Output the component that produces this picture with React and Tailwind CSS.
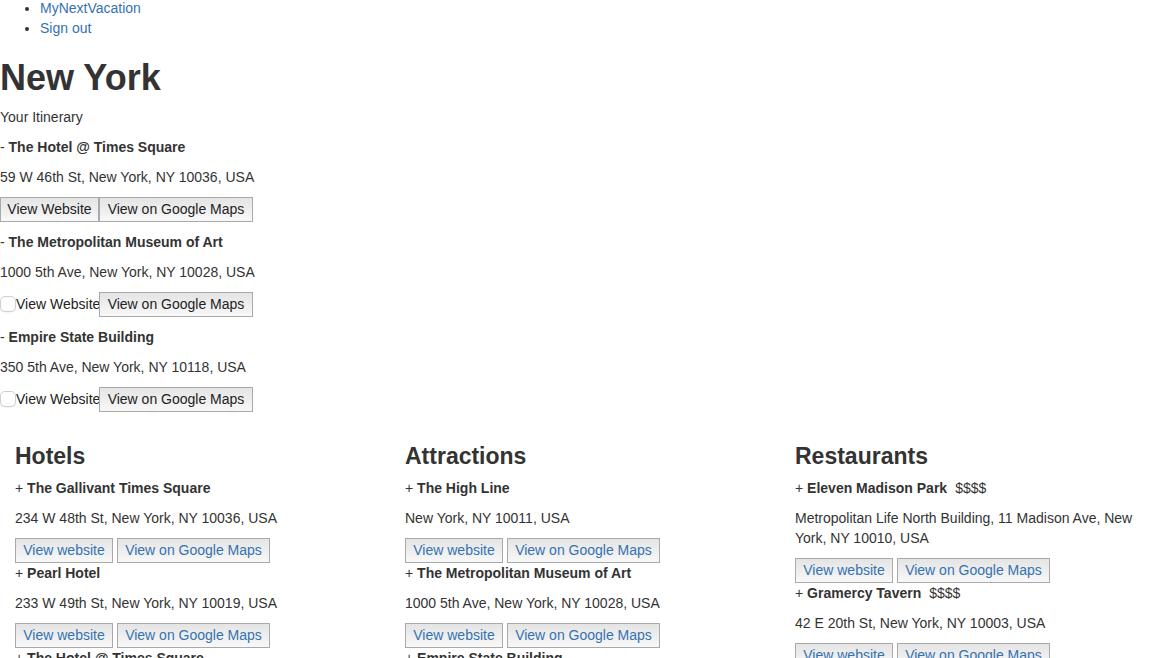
import React from "react";

const buttonClass =
  "inline-flex h-[25px] items-start justify-center whitespace-nowrap border border-[#a9a9a9] bg-linear-to-b from-[#e4e4e4] to-[#f8f8f8] pt-px";

const itinerary = [
  { name: "The Hotel @ Times Square", address: "59 W 46th St, New York, NY 10036, USA", website: true },
  { name: "The Metropolitan Museum of Art", address: "1000 5th Ave, New York, NY 10028, USA", website: false },
  { name: "Empire State Building", address: "350 5th Ave, New York, NY 10118, USA", website: false },
];

const sections = [
  {
    title: "Hotels",
    places: [
      { name: "The Gallivant Times Square", address: "234 W 48th St, New York, NY 10036, USA" },
      { name: "Pearl Hotel", address: "233 W 49th St, New York, NY 10019, USA" },
      { name: "The Hotel @ Times Square", address: "59 W 46th St, New York, NY 10036, USA" },
    ],
  },
  {
    title: "Attractions",
    places: [
      { name: "The High Line", address: "New York, NY 10011, USA" },
      { name: "The Metropolitan Museum of Art", address: "1000 5th Ave, New York, NY 10028, USA" },
      { name: "Empire State Building", address: "350 5th Ave, New York, NY 10118, USA" },
    ],
  },
  {
    title: "Restaurants",
    places: [
      {
        name: "Eleven Madison Park",
        price: "$$$$",
        address: "Metropolitan Life North Building, 11 Madison Ave, New York, NY 10010, USA",
      },
      { name: "Gramercy Tavern", price: "$$$$", address: "42 E 20th St, New York, NY 10003, USA" },
    ],
  },
];

function ItineraryItem({ item, id }) {
  return (
    <div className="flex flex-col gap-2.5">
      <p>
        - <strong>{item.name}</strong>
      </p>
      <p>{item.address}</p>
      <div className="flex text-[#222]">
        {item.website ? (
          <button type="button" className={`${buttonClass} w-[99px]`}>
            View Website
          </button>
        ) : (
          <div className="flex w-[99px] items-center pb-px">
            <input
              id={id}
              type="checkbox"
              className="size-4 shrink-0 appearance-none rounded-[5px] border border-[#cfcfcf] bg-white shadow-xs"
            />
            <label htmlFor={id} className="whitespace-nowrap">
              View Website
            </label>
          </div>
        )}
        <button type="button" className={`${buttonClass} w-[154px]`}>
          View on Google Maps
        </button>
      </div>
    </div>
  );
}

function Place({ place }) {
  return (
    <div>
      <p>
        + <strong>{place.name}</strong>
        {place.price && <span className="ml-2">{place.price}</span>}
      </p>
      <p className="my-2.5">{place.address}</p>
      <div className="flex gap-1 text-[#3572b0]">
        <a href="#website" className={`${buttonClass} w-[98px]`}>
          View website
        </a>
        <a href="#map" className={`${buttonClass} w-[153px]`}>
          View on Google Maps
        </a>
      </div>
    </div>
  );
}

export default function App() {
  return (
    <div className="overflow-x-clip bg-white font-['Liberation_Sans',Arial,sans-serif] text-[14px] leading-5 text-[#333]">
      <ul className="-mt-0.5 list-disc pl-10">
        <li>
          <a href="#home" className="text-[#3572b0]">
            MyNextVacation
          </a>
        </li>
        <li>
          <a href="#signout" className="text-[#3572b0]">
            Sign out
          </a>
        </li>
      </ul>
      <h1 className="mt-5 mb-[9px] text-[36px] leading-10 font-bold">New York</h1>
      <div className="flex flex-col gap-2.5">
        <p>Your Itinerary</p>
        {itinerary.map((item, i) => (
          <ItineraryItem key={item.name} item={item} id={`website-${i}`} />
        ))}
      </div>
      <div className="-mr-2.5 mt-[30px] grid grid-cols-3">
        {sections.map((section) => (
          <section key={section.title} className="px-[15px]">
            <h3 className="mb-2 text-[23px] leading-7 font-bold">{section.title}</h3>
            {section.places.map((place) => (
              <Place key={place.name} place={place} />
            ))}
          </section>
        ))}
      </div>
    </div>
  );
}
